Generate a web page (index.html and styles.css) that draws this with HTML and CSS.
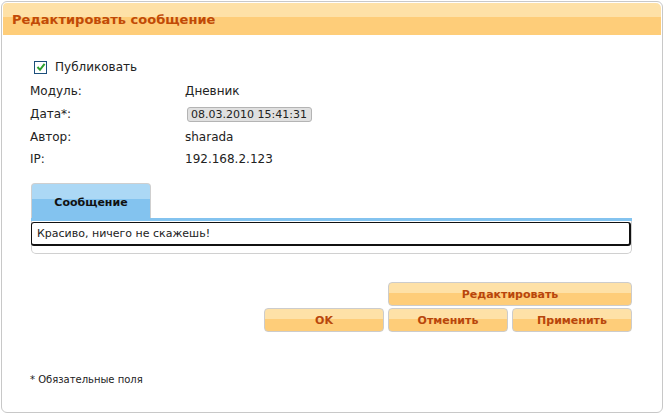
FILE: index.html
```html
<!DOCTYPE html>
<html lang="ru">
<head>
<meta charset="utf-8">
<title>Редактировать сообщение</title>
<link rel="stylesheet" href="styles.css">
</head>
<body>
<div class="panel">
  <div class="panel-head">Редактировать сообщение</div>
  <div class="panel-body">
    <div class="check-row">
      <span class="checkbox">
        <svg width="10" height="10" viewBox="0 0 10 10"><path d="M1.5 5 L4 7.8 L8.6 1.8" fill="none" stroke="#2ea12e" stroke-width="2"/></svg>
      </span>
      <span class="check-label">Публиковать</span>
    </div>
    <div class="fields">
      <div class="label">Модуль:</div><div class="value">Дневник</div>
      <div class="label tall">Дата*:</div><div class="value tall"><span class="date-input">08.03.2010 15:41:31</span></div>
      <div class="label">Автор:</div><div class="value">sharada</div>
      <div class="label">IP:</div><div class="value">192.168.2.123</div>
    </div>
    <div class="tabs">
      <div class="tab-bar"><div class="tab">Сообщение</div></div>
      <div class="tab-line"></div>
      <div class="tab-body">
        <div class="text-input">Красиво, ничего не скажешь!</div>
      </div>
    </div>
    <div class="buttons">
      <div class="btn wide">Редактировать</div>
      <div class="btn">OK</div>
      <div class="btn">Отменить</div>
      <div class="btn">Применить</div>
    </div>
    <div class="footnote">* Обязательные поля</div>
  </div>
</div>
</body>
</html>
```

FILE: styles.css
```css
html, body {
  margin: 0;
  padding: 0;
  background: #ffffff;
}
body {
  font-family: "DejaVu Sans", Verdana, sans-serif;
  font-size: 12px;
  color: #222;
}
.panel {
  margin: 1px 1px 0 1px;
  height: 412px;
  box-sizing: border-box;
  border: 1px solid #c8c8c8;
  border-radius: 6px;
  padding: 1px;
  display: flex;
  flex-direction: column;
}
.panel-head {
  height: 32px;
  background: linear-gradient(#fee1a7 0, #fee1a7 14px, #fecd79 14px, #fecd79 100%);
  border-top-right-radius: 5px;
  border-top-left-radius: 4px;
  color: #c14a06;
  font-weight: bold;
  font-size: 13px;
  display: flex;
  align-items: center;
  padding-left: 9px;
}
.panel-body {
  flex: 1;
  display: flex;
  flex-direction: column;
  padding: 21px 29px 0 27px;
}
.check-row {
  height: 22px;
  display: flex;
  align-items: center;
  margin-left: 4px;
  margin-bottom: 2px;
}
.checkbox {
  width: 11px;
  height: 11px;
  border: 1px solid #1c4f7c;
  background: #fff;
  display: flex;
  align-items: center;
  justify-content: center;
}
.check-label {
  margin-left: 8px;
}
.fields {
  display: grid;
  grid-template-columns: 155px 1fr;
  grid-template-rows: 22px 24px 22px 22px;
}
.fields .label, .fields .value {
  display: flex;
  align-items: center;
}
.fields .label {
  grid-column: 1;
}
.fields .value {
  grid-column: 2;
}
.date-input {
  display: inline-block;
  margin-left: 2px;
  background: #e0e0e0;
  border: 1px solid #b4b4b4;
  border-radius: 3px;
  font-size: 11px;
  line-height: 13px;
  padding: 0 4px 0 3px;
}
.tabs {
  margin-top: 13px;
  margin-left: 1px;
  display: flex;
  flex-direction: column;
}
.tab-bar {
  display: flex;
}
.tab {
  width: 118px;
  height: 32px;
  padding-top: 2px;
  border: 1px solid #cfcfcf;
  border-bottom: 0;
  border-radius: 4px 4px 0 0;
  background: linear-gradient(#acd8f5 0, #acd8f5 15px, #83c3ef 15px, #83c3ef 100%);
  font-weight: bold;
  font-size: 11px;
  color: #111;
  display: flex;
  align-items: center;
  justify-content: center;
}
.tab-line {
  height: 3px;
  background: #83c3ef;
}
.tab-body {
  border: 1px solid #d0d0d0;
  border-top: 0;
  border-radius: 0 0 5px 5px;
  padding: 1px 0 7px 0;
}
.text-input {
  height: 21px;
  border: 2px solid #111;
  border-top-width: 1px;
  border-left-width: 1px;
  border-radius: 3px;
  margin-left: -1px;
  display: flex;
  align-items: center;
  padding-left: 5px;
  font-size: 11px;
  color: #222;
}
.buttons {
  margin-top: 28px;
  align-self: flex-end;
  display: grid;
  grid-template-columns: 120px 120px 120px;
  column-gap: 4px;
  row-gap: 2px;
}
.btn {
  height: 22px;
  border: 1px solid #cccccc;
  border-radius: 4px;
  background: linear-gradient(#fee1a7 0, #fee1a7 10px, #fecd79 10px, #fecd79 100%);
  color: #b8460c;
  font-weight: bold;
  font-size: 11px;
  display: flex;
  align-items: center;
  justify-content: center;
}
.btn.wide {
  grid-column: 2 / span 2;
}
.footnote {
  margin-top: auto;
  margin-bottom: 26px;
  font-size: 10px;
  color: #222;
}
```
